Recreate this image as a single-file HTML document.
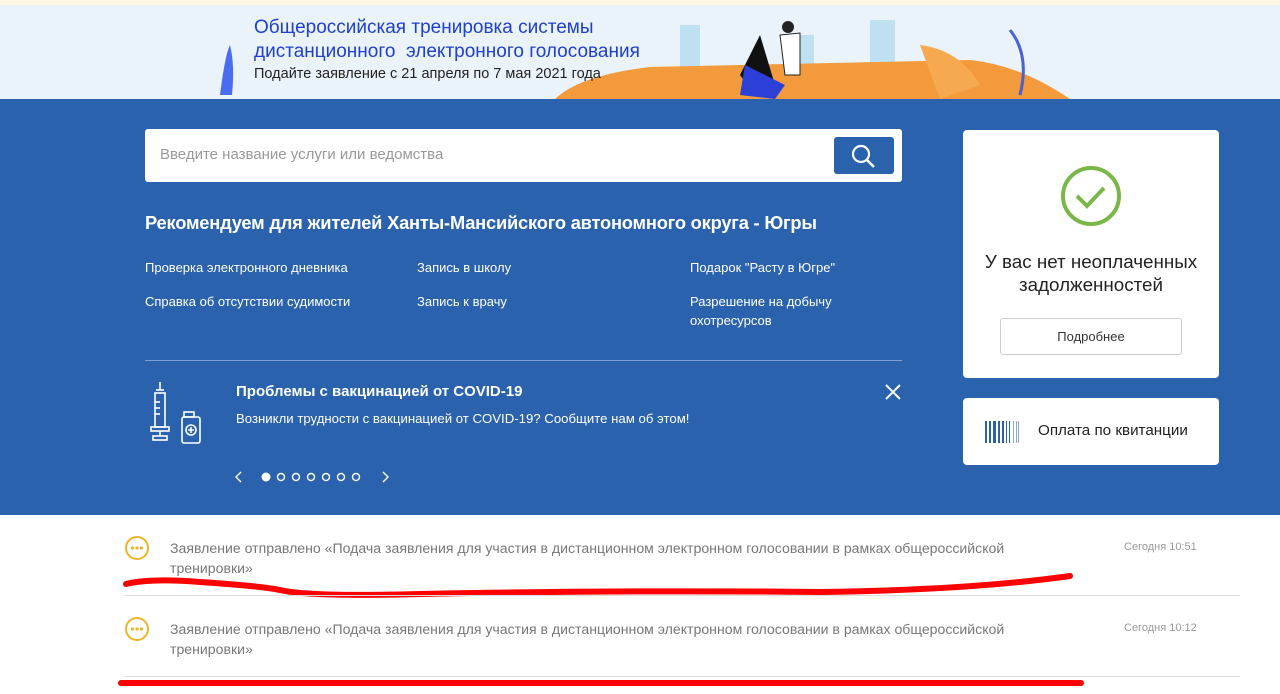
<!DOCTYPE html>
<html><head><meta charset="utf-8"><style>
*{margin:0;padding:0;box-sizing:border-box}
body{width:1280px;height:694px;overflow:hidden;font-family:"Liberation Sans",Arial,sans-serif;background:#fff;position:relative}
.a{position:absolute}
.blue{background:#2a62ad}
.w{color:#fff}
</style></head><body>
<div class="a" style="left:0;top:0;width:1280px;height:5px;background:#fdf6e3"></div>
<div class="a" style="left:0;top:5px;width:1280px;height:94px;background:#eaf3f9"></div>
<svg class="a" style="left:200px;top:5px" width="880" height="94">
<path d="M20 90 Q25 50 30 40 Q35 60 32 90Z" fill="#4a6cf0"/>
<rect x="480" y="20" width="20" height="50" fill="#bfe0f0"/><rect x="600" y="30" width="14" height="40" fill="#bfe0f0"/><rect x="670" y="15" width="25" height="55" fill="#bfe0f0"/>
<path d="M355 94 Q380 70 450 62 L770 55 Q820 60 870 94Z" fill="#f29a3c"/>
<path d="M720 40 Q760 45 780 80 L740 94Z" fill="#f6a94f"/>
<path d="M810 25 Q830 50 820 90" stroke="#4b5fd6" stroke-width="3" fill="none"/>
<path d="M560 30 L575 80 L555 90 L540 70Z" fill="#111"/><path d="M545 60 L585 80 L575 94 L540 90Z" fill="#2c3fd6"/>
<circle cx="588" cy="22" r="6" fill="#222"/><path d="M580 30 L600 28 L600 70 L585 70Z" fill="#fff" stroke="#222"/>
</svg>
<div class="a" style="left:254px;top:16px;font-size:19px;color:#1e3fcf;line-height:24px">Общероссийская тренировка системы<br>дистанционного&nbsp; электронного голосования</div>
<div class="a" style="left:254px;top:66px;font-size:14.5px;color:#222">Подайте заявление с 21 апреля по 7 мая 2021 года</div>

<div class="a blue" style="left:0;top:99px;width:1280px;height:416px"></div>
<div class="a" style="left:145px;top:129px;width:757px;height:53px;background:#fff;border-radius:3px"></div>
<div class="a" style="left:160px;top:146px;font-size:15px;color:#999">Введите название услуги или ведомства</div>
<div class="a blue" style="left:834px;top:137px;width:60px;height:37px;border-radius:3px"></div>
<svg class="a" style="left:850px;top:143px" width="28" height="26"><circle cx="11" cy="11" r="8" stroke="#fff" stroke-width="2.2" fill="none"/><line x1="17" y1="17" x2="24" y2="24" stroke="#fff" stroke-width="2.5"/></svg>
<div class="a w" style="left:145px;top:212px;font-size:18.3px;font-weight:bold;letter-spacing:-.2px">Рекомендуем для жителей Ханты-Мансийского автономного округа - Югры</div>
<div class="a w" style="left:145px;top:260px;font-size:13px">Проверка электронного дневника</div>
<div class="a w" style="left:145px;top:294px;font-size:13px">Справка об отсутствии судимости</div>
<div class="a w" style="left:417px;top:260px;font-size:13px">Запись в школу</div>
<div class="a w" style="left:417px;top:294px;font-size:13px">Запись к врачу</div>
<div class="a w" style="left:690px;top:260px;font-size:13px">Подарок "Расту в Югре"</div>
<div class="a w" style="left:690px;top:292px;font-size:13px;line-height:19px">Разрешение на добычу<br>охотресурсов</div>
<div class="a" style="left:145px;top:360px;width:757px;height:1px;background:#7fa0d0"></div>
<svg class="a" style="left:145px;top:380px" width="60" height="66" fill="none" stroke="#fff" stroke-width="1.6">
<line x1="15" y1="2" x2="15" y2="10"/><line x1="11" y1="10" x2="19" y2="10"/><rect x="10" y="13" width="10" height="34"/><line x1="10" y1="22" x2="15" y2="22"/><line x1="10" y1="28" x2="15" y2="28"/><line x1="10" y1="34" x2="15" y2="34"/><rect x="6" y="47" width="18" height="4"/><line x1="15" y1="51" x2="15" y2="56"/><rect x="8" y="56" width="14" height="4"/>
<rect x="39" y="32" width="10" height="5"/><rect x="37" y="37" width="18" height="26" rx="2"/><circle cx="46" cy="50" r="5"/><path d="M46 47v6M43 50h6"/>
</svg>
<div class="a w" style="left:236px;top:383px;font-size:15px;font-weight:bold">Проблемы с вакцинацией от COVID-19</div>
<div class="a w" style="left:236px;top:411px;font-size:13.2px">Возникли трудности с вакцинацией от COVID-19? Сообщите нам об этом!</div>
<svg class="a" style="left:885px;top:384px" width="16" height="16" stroke="#fff" stroke-width="2"><path d="M1 1L15 15M15 1L1 15"/></svg>
<svg class="a" style="left:230px;top:469px" width="165" height="16" fill="none" stroke="#fff" stroke-width="1.4">
<path d="M11 3L6 8L11 13"/><circle cx="36" cy="8" r="3.8" fill="#fff"/><circle cx="51" cy="8" r="3.5"/><circle cx="66" cy="8" r="3.5"/><circle cx="81" cy="8" r="3.5"/><circle cx="96" cy="8" r="3.5"/><circle cx="111" cy="8" r="3.5"/><circle cx="126" cy="8" r="3.5"/><path d="M153 3L158 8L153 13"/>
</svg>

<div class="a" style="left:963px;top:130px;width:256px;height:248px;background:#fff;border-radius:4px"></div>
<svg class="a" style="left:1060px;top:166px" width="62" height="62"><circle cx="31" cy="30" r="28" stroke="#7ab648" stroke-width="4" fill="none"/><path d="M17 30L27 40L44 22" stroke="#7ab648" stroke-width="4" fill="none"/></svg>
<div class="a" style="left:963px;top:250px;width:256px;text-align:center;font-size:18.8px;line-height:23px;color:#222">У вас нет неоплаченных<br>задолженностей</div>
<div class="a" style="left:1000px;top:318px;width:182px;height:37px;border:1px solid #ccc;border-radius:3px;text-align:center;line-height:36px;font-size:13px;color:#333">Подробнее</div>
<div class="a" style="left:963px;top:398px;width:256px;height:67px;background:#fff;border-radius:4px"></div>
<svg class="a" style="left:985px;top:421px" width="36" height="22"><g fill="#2a62ad"><rect x="0" width="2" height="22"/><rect x="4" width="2" height="22"/><rect x="8" width="3" height="22"/><rect x="13" width="2" height="22"/><rect x="17" width="2" height="22"/><rect x="21" width="1" height="22"/><rect x="24" width="1" height="22"/></g><g fill="#8aa8d8"><rect x="28" width="1" height="22"/><rect x="31" width="1" height="22"/><rect x="33" width="1" height="22"/></g></svg>
<div class="a" style="left:1038px;top:422px;font-size:15.2px;color:#222">Оплата по квитанции</div>

<svg class="a" style="left:124px;top:536px" width="26" height="26"><circle cx="13" cy="12" r="11" stroke="#f0b429" stroke-width="2" fill="none"/><g fill="#f0b429"><circle cx="8.5" cy="12" r="1.6"/><circle cx="13" cy="12" r="1.6"/><circle cx="17.5" cy="12" r="1.6"/></g></svg>
<div class="a" style="left:170px;top:538px;font-size:14.1px;line-height:20px;color:#777;width:950px">Заявление отправлено «Подача заявления для участия в дистанционном электронном голосовании в рамках общероссийской<br>тренировки»</div>
<div class="a" style="left:1124px;top:541px;font-size:11px;color:#999">Сегодня 10:51</div>
<svg class="a" style="left:120px;top:570px" width="960" height="30"><path d="M6 14 Q30 8 80 12 Q140 16 160 20 Q190 27 300 24 Q500 20 700 22 Q850 20 950 6" stroke="#f00" stroke-width="6" fill="none" stroke-linecap="round"/></svg>
<div class="a" style="left:125px;top:595px;width:1115px;height:1px;background:#ddd"></div>
<svg class="a" style="left:124px;top:617px" width="26" height="26"><circle cx="13" cy="12" r="11" stroke="#f0b429" stroke-width="2" fill="none"/><g fill="#f0b429"><circle cx="8.5" cy="12" r="1.6"/><circle cx="13" cy="12" r="1.6"/><circle cx="17.5" cy="12" r="1.6"/></g></svg>
<div class="a" style="left:170px;top:619px;font-size:14.1px;line-height:20px;color:#777;width:950px">Заявление отправлено «Подача заявления для участия в дистанционном электронном голосовании в рамках общероссийской<br>тренировки»</div>
<div class="a" style="left:1124px;top:622px;font-size:11px;color:#999">Сегодня 10:12</div>
<div class="a" style="left:125px;top:676px;width:1115px;height:1px;background:#ddd"></div>
<div class="a" style="left:118px;top:680px;width:966px;height:6px;background:#f00;border-radius:3px"></div>
</body></html>
